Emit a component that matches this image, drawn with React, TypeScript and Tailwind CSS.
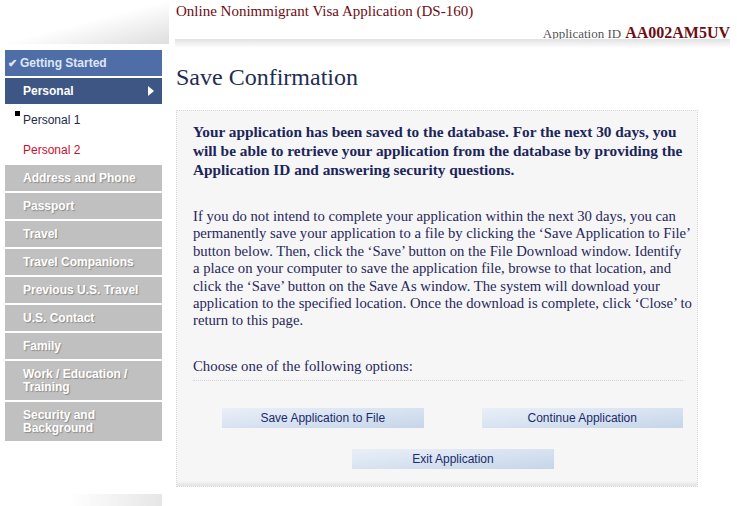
import React from "react";

const grayItems: string[][] = [
  ["Address and Phone"],
  ["Passport"],
  ["Travel"],
  ["Travel Companions"],
  ["Previous U.S. Travel"],
  ["U.S. Contact"],
  ["Family"],
  ["Work / Education /", "Training"],
  ["Security and", "Background"],
];

const infoLines = [
  "If you do not intend to complete your application within the next 30 days, you can",
  "permanently save your application to a file by clicking the ‘Save Application to File’",
  "button below. Then, click the ‘Save’ button on the File Download window. Identify",
  "a place on your computer to save the application file, browse to that location, and",
  "click the ‘Save’ button on the Save As window. The system will download your",
  "application to the specified location. Once the download is complete, click ‘Close’ to",
  "return to this page.",
];

function SideNav() {
  return (
    <div className="w-[170px] shrink-0 flex flex-col">
      <div className="h-[44px] w-[169px] bg-gradient-to-br from-white via-white to-[#dedede]" />
      <div className="ml-[5px] mt-[6px] w-[157px] flex flex-col gap-[2px] font-['Liberation_Sans',Arial,sans-serif] text-[12px] font-bold">
        <div className="h-[26px] bg-[#4f6ea8] text-[#dfe6f3] flex items-center pl-[3px]">
          <span className="mr-[3px] text-[11px]">✔</span>Getting Started
        </div>
        <div className="h-[26px] bg-[#3e5683] text-white flex items-center justify-between pl-[18px] pr-[8px]">
          <span>Personal</span>
          <svg width="6" height="10" viewBox="0 0 6 10">
            <path d="M0 0 L6 5 L0 10 Z" fill="#ffffff" />
          </svg>
        </div>
        <div className="h-[28px] flex items-center pl-[18px] font-normal text-[#1d2a4a] relative">
          <span className="absolute left-[10px] top-[5px] w-[5px] h-[5px] bg-black" />
          Personal 1
        </div>
        <div className="h-[27px] flex items-center pl-[18px] font-normal text-[#c8102e]">
          Personal 2
        </div>
        {grayItems.map((lines) => (
          <div
            key={lines[0]}
            className={`bg-[#c0c0c0] text-white pl-[18px] flex flex-col justify-center leading-[13px] [text-shadow:1px_1px_1px_#8a8a8a] ${
              lines.length > 1 ? "h-[39px]" : "h-[26px]"
            }`}
          >
            {lines.map((l) => (
              <span key={l}>{l}</span>
            ))}
          </div>
        ))}
      </div>
      <div className="mt-[53px] ml-[70px] h-[12px] w-[92px] bg-gradient-to-r from-white to-[#e6e6e6]" />
    </div>
  );
}

function NavButton({ label }: { label: string }) {
  return (
    <button className="w-[202px] h-[20px] bg-gradient-to-br from-[#e9eff8] via-[#d8e3f1] to-[#c6d5e8] text-[#1b2a6b] text-[12px] font-['Liberation_Sans',Arial,sans-serif] leading-none">
      {label}
    </button>
  );
}

export default function App() {
  return (
    <div className="w-[737px] h-[506px] bg-white flex overflow-hidden font-['Liberation_Serif','Times_New_Roman',serif]">
      <SideNav />
      <div className="w-[567px] pl-[6px] flex flex-col">
        <div className="pt-[3px] text-[15px] leading-[17px] text-[#6e0c12]">
          Online Nonimmigrant Visa Application (DS-160)
        </div>
        <div className="mt-[1px] h-[18px] pr-[7px] flex justify-end items-baseline gap-[4px]">
          <span className="text-[13px] text-[#555555]">Application ID</span>
          <span className="text-[16px] font-bold text-[#6b0d14]">AA002AM5UV</span>
        </div>
        <div className="-ml-[1px] h-[9px] w-[555px] bg-gradient-to-b from-[#e2e2e2] to-white" />
        <h1 className="mt-[15px] text-[24px] leading-[28px] text-[#1f2d52]">Save Confirmation</h1>
        <div className="mt-[19px] w-[522px] h-[377px] border border-dotted border-[#d8d8d8] bg-[#f6f6f7] pl-[16px] pr-[14px] pt-[11px] flex flex-col relative">
          <p className="w-[500px] text-[15.3px] leading-[19px] font-bold text-[#1c2559]">
            Your application has been saved to the database. For the next 30 days, you will be able to
            retrieve your application from the database by providing the Application ID and answering
            security questions.
          </p>
          <p className="mt-[29px] text-[14.7px] leading-[17.4px] text-[#27275a] whitespace-nowrap">
            {infoLines.map((l) => (
              <span key={l} className="block">
                {l}
              </span>
            ))}
          </p>
          <div className="mt-[28px] w-[490px] pb-[5px] border-b border-dotted border-[#d4d4d4] text-[14.8px] leading-[17px] text-[#27275a]">
            Choose one of the following options:
          </div>
          <div className="mt-[27px] flex pl-[29px] gap-[58px]">
            <NavButton label="Save Application to File" />
            <NavButton label="Continue Application" />
          </div>
          <div className="mt-[21px] flex pl-[159px]">
            <NavButton label="Exit Application" />
          </div>
          <div className="absolute left-0 right-0 bottom-0 h-[5px] bg-gradient-to-b from-[#f6f6f7] to-[#e2e2e2]" />
        </div>
      </div>
    </div>
  );
}
